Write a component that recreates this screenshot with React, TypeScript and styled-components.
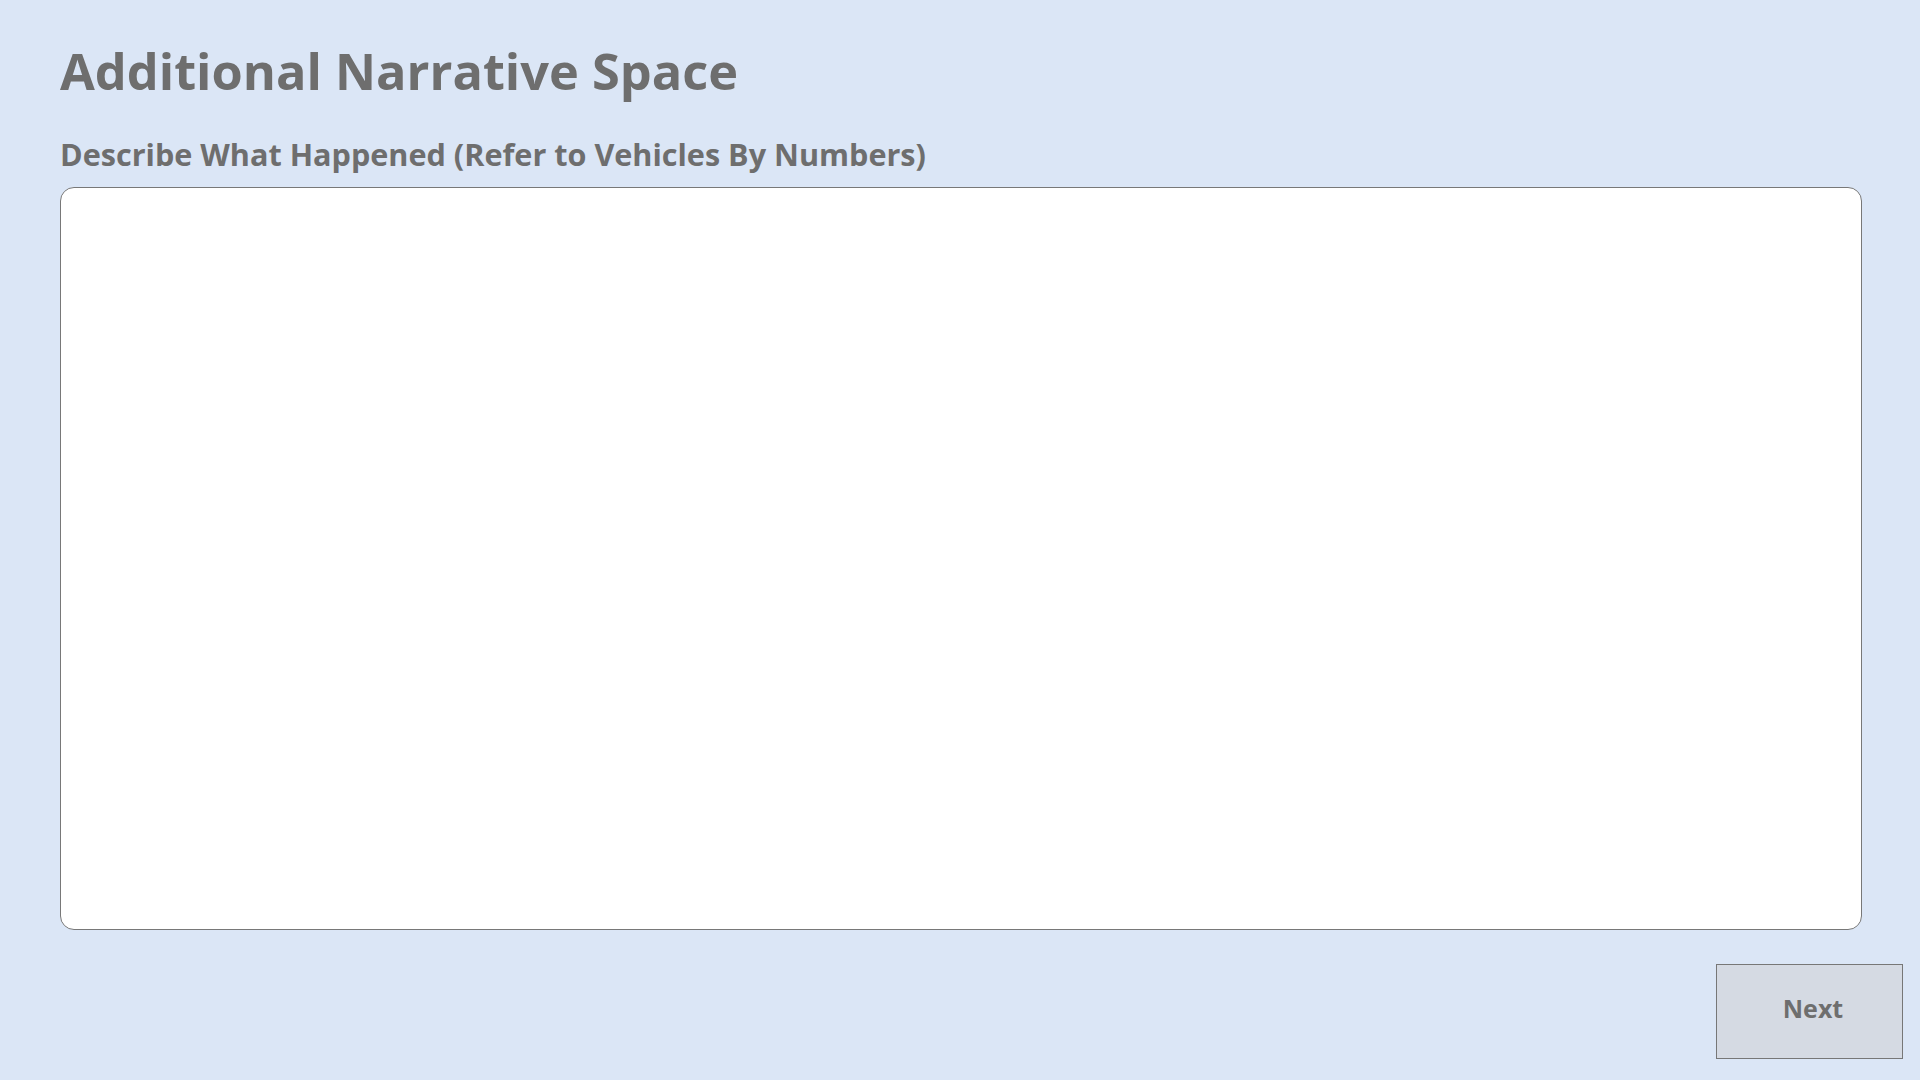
import React from "react";
import styled, { createGlobalStyle } from "styled-components";

const Global = createGlobalStyle`
  html, body { margin: 0; padding: 0; background: #dbe6f6; }
  body { font-family: "Open Sans", "Noto Sans", sans-serif; }
`;

const Page = styled.div`
  width: 1920px;
  height: 1080px;
  box-sizing: border-box;
  padding: 38px 17px 0 60px;
  display: flex;
  flex-direction: column;
  background: #dbe6f6;
`;

const Title = styled.h1`
  margin: 0;
  font-size: 50.5px;
  line-height: 66px;
  font-weight: 700;
  color: #6e6e6e;
`;

const Label = styled.label`
  margin-top: 30px;
  font-size: 30.6px;
  line-height: 40px;
  font-weight: 700;
  color: #6e6e6e;
`;

const Narrative = styled.textarea`
  margin-top: 13px;
  width: 1802px;
  height: 743px;
  box-sizing: border-box;
  border: 1px solid #787878;
  border-radius: 14px;
  background: #ffffff;
  resize: none;
  outline: none;
  padding: 12px 16px;
  font-family: inherit;
  font-size: 24px;
  color: #444;
`;

const Footer = styled.div`
  display: flex;
  justify-content: flex-end;
  margin-top: 34px;
`;

const NextButton = styled.button`
  width: 187px;
  height: 95px;
  box-sizing: border-box;
  padding: 0 0 7px 7px;
  border: 1px solid #777777;
  background: #d5dae3;
  color: #6e6e6e;
  font-family: inherit;
  font-size: 25px;
  font-weight: 700;
  cursor: pointer;
  border-radius: 0;
`;

export default function App() {
  return (
    <>
      <Global />
      <Page>
        <Title>Additional Narrative Space</Title>
        <Label htmlFor="narrative">Describe What Happened (Refer to Vehicles By Numbers)</Label>
        <Narrative id="narrative" />
        <Footer>
          <NextButton>Next</NextButton>
        </Footer>
      </Page>
    </>
  );
}
